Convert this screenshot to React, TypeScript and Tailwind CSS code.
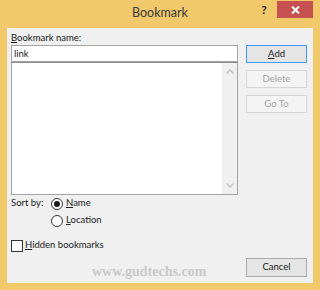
import React from 'react';

const ui = { fontFamily: '"Segoe UI", Lato, "Noto Sans", sans-serif' };

const Btn = ({ label, mnemonic, primary, disabled, tall }: { label: string; mnemonic?: number; primary?: boolean; disabled?: boolean; tall?: boolean }) => {
  const text = mnemonic === undefined ? label : (
    <>
      {label.slice(0, mnemonic)}
      <u className="underline-offset-[1px]">{label[mnemonic]}</u>
      {label.slice(mnemonic + 1)}
    </>
  );
  return (
    <div
      className={`${tall ? 'h-[19px]' : 'h-[18px]'} w-[61px] flex items-center justify-center text-[9.5px] border ${
        primary
          ? 'border-[#3c9cfc] bg-[#e5e5e5] text-[#1a1a1a]'
          : disabled
          ? 'border-[#d5d5d5] bg-[#f4f4f4] text-[#a3a3a3]'
          : 'border-[#acacac] bg-[#e5e5e5] text-[#1a1a1a]'
      }`}
    >
      {text}
    </div>
  );
};

const Radio = ({ checked }: { checked?: boolean }) => (
  <div className="w-[12px] h-[12px] shrink-0 rounded-full border border-[#333] bg-white flex items-center justify-center">
    {checked && <div className="w-[6px] h-[6px] rounded-full bg-[#1a1a1a]" />}
  </div>
);

export default function App() {
  return (
    <div className="w-[320px] h-[290px] bg-[#f1c96b] flex flex-col relative" style={ui}>
      {/* title bar */}
      <div className="h-[28px] grid grid-cols-[1fr_auto_1fr]">
        <div />
        <div className="text-[12.5px] leading-[25px] text-[#3a3a3a]">Bookmark</div>
        <div className="flex justify-end pr-[7px] items-start">
          <div className="w-[14px] h-[17px] pt-[1px] text-[12px] leading-[17px] font-bold text-[#222] mr-[6px] text-center">?</div>
          <div className="w-[36px] h-[17px] mt-[1px] bg-[#c75050] flex items-center justify-center">
            <svg width="9" height="8" viewBox="0 0 9 8">
              <path d="M1 0.5 L8 7.5 M8 0.5 L1 7.5" stroke="#fff" strokeWidth="2" />
            </svg>
          </div>
        </div>
      </div>

      {/* client area */}
      <div className="mx-[7px] h-[255px] bg-[#f0f0f0] flex pl-[4px] pr-[6px] gap-[8px] text-[9.5px] text-[#1a1a1a] whitespace-nowrap">
        <div className="w-[227px] flex flex-col pt-[2px]">
          <div className="h-[15px] leading-[15px]">
            <u className="underline-offset-[1px]">B</u>ookmark name:
          </div>
          <div className="h-[17px] border border-[#a3a3a3] bg-white pl-[2px] leading-[15px]">link</div>
          <div className="h-[133px] border border-[#a3a3a3] border-t-[#8e8e8e] bg-white flex justify-end">
            <div className="w-[15px] h-full bg-[#f0f0f0] flex flex-col justify-between items-center py-[6px]">
              <svg width="8" height="5" viewBox="0 0 8 5">
                <path d="M0.5 4.5 L4 1 L7.5 4.5" fill="none" stroke="#c2c2c2" strokeWidth="1.5" />
              </svg>
              <svg width="8" height="5" viewBox="0 0 8 5">
                <path d="M0.5 0.5 L4 4 L7.5 0.5" fill="none" stroke="#c2c2c2" strokeWidth="1.5" />
              </svg>
            </div>
          </div>
          <div className="flex h-[17px] items-center">
            <div className="w-[40px] shrink-0">Sort by:</div>
            <Radio checked />
            <div className="ml-[3px]">
              <u className="underline-offset-[1px]">N</u>ame
            </div>
          </div>
          <div className="flex h-[17px] items-center pl-[40px]">
            <Radio />
            <div className="ml-[3px]">
              <u className="underline-offset-[1px]">L</u>ocation
            </div>
          </div>
          <div className="flex h-[17px] items-center mt-[8px]">
            <div className="w-[12px] h-[12px] border border-[#333] bg-white" />
            <div className="ml-[2px]">
              <u className="underline-offset-[1px]">H</u>idden bookmarks
            </div>
          </div>
        </div>

        <div className="w-[61px] flex flex-col pt-[17px] pb-[6px] gap-[7px]">
          <Btn label="Add" mnemonic={0} primary />
          <Btn label="Delete" disabled />
          <Btn label="Go To" disabled />
          <div className="mt-auto">
            <Btn label="Cancel" tall />
          </div>
        </div>
      </div>

      {/* watermark */}
      <div
        className="absolute left-[92px] top-[261px] text-[14px] font-bold text-[#c9c9c9]"
        style={{ fontFamily: '"Liberation Serif", serif' }}
      >
        www.gudtechs.com
      </div>
    </div>
  );
}
